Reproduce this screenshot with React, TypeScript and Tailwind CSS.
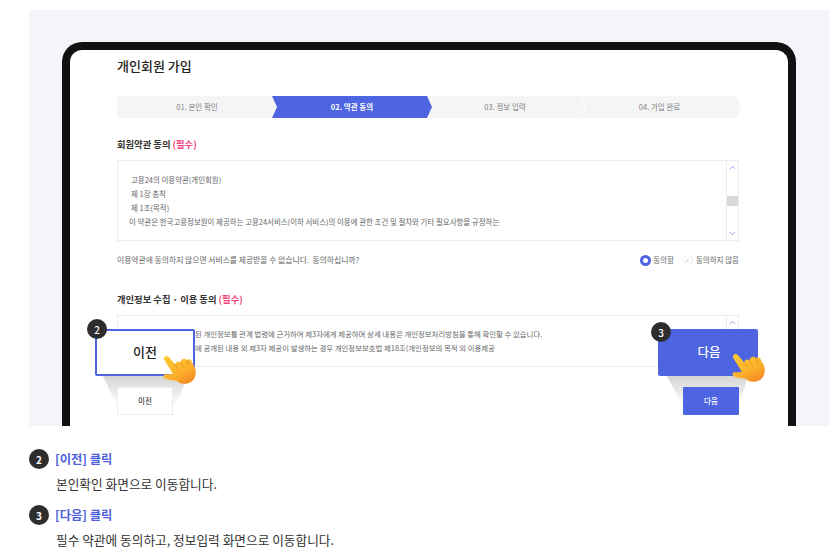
import { ChevronUp, ChevronDown } from 'lucide-react';

const FONT = { fontFamily: '"Noto Sans CJK KR", "Noto Sans", sans-serif' };

function Hand({ className }: { className: string }) {
  return (
    <svg viewBox="0 0 33 29" className={className}>
      <defs>
        <linearGradient id="handFill" x1="0.15" y1="0" x2="0.75" y2="1">
          <stop offset="0" stopColor="#fdc92f" />
          <stop offset="0.6" stopColor="#fbb02a" />
          <stop offset="1" stopColor="#f58a25" />
        </linearGradient>
      </defs>
      <path
        d="M1 4.5C.2 2 3.6-.3 5.8 2L12.2 9.6C12.4 6.6 15.6 5.4 17.4 7.4C17.9 3.6 22 2.4 23.8 5.2C25.6 3.4 28.6 4.6 29 7.4C31.8 11 33.4 15 32.6 19.4C31.7 25.4 26.6 29 21 28.8C17.8 28.7 15.4 27.4 13.2 25.4C9.6 25.6 5.2 25 1.6 23.2C-.4 21.8.4 19 2.8 19.2C5.2 19.4 7.6 19.4 9.8 18.8L1 4.5Z"
        fill="url(#handFill)"
      />
      <path d="M12.2 9.6L15 14M17.4 7.4L20.4 12.4M23.8 5.2L26 10" stroke="#e8891c" strokeWidth="0.8" fill="none" strokeLinecap="round" />
    </svg>
  );
}

function Scrollbar({ thumb }: { thumb?: boolean }) {
  return (
    <div className="w-[12px] shrink-0 border-l border-[#ececec] flex flex-col items-center">
      <ChevronUp className="w-[9px] h-[9px] mt-[2px] text-[#8f9cf0] shrink-0" strokeWidth={2.5} />
      {thumb && <div className="w-full h-[10px] mt-[24px] bg-[#d9d9d9] shrink-0" />}
      {thumb && <ChevronDown className="w-[9px] h-[9px] mt-auto mb-[2px] text-[#8f9cf0] shrink-0" strokeWidth={2.5} />}
    </div>
  );
}

function Required() {
  return <span className="text-[#f0447a]"> (필수)</span>;
}

function Badge({ n, className }: { n: number; className: string }) {
  return (
    <div className={`rounded-full bg-[#2d2d2d] text-white flex items-center justify-center ${className}`}>{n}</div>
  );
}

export default function App() {
  return (
    <div className="w-[840px] h-[550px] overflow-hidden bg-white pt-[10px] pl-[29px]" style={FONT}>
      {/* Guide picture */}
      <div className="relative w-[800px] h-[416px] bg-[#f3f5fa] overflow-hidden pt-[32px] pl-[33px]">
        <div className="w-[734px] h-[400px] bg-white border-[8px] border-b-0 border-[#111111] rounded-t-[20px] pl-[47px] pr-[49px]">
          <h1 className="text-[13px] leading-[20px] font-medium text-[#222] mt-[6px]">개인회원 가입</h1>

          {/* Steps */}
          <div className="flex mt-[20px] h-[22px] text-[7.5px] text-[#808080]">
            <div className="w-[160px] shrink-0 bg-[#f5f5f5] flex items-center justify-center">01. 본인 확인</div>
            <div className="w-[160px] shrink-0 -ml-[5px] bg-[#4d65e0] text-white font-bold flex items-center justify-center relative z-10 [clip-path:polygon(0_0,155px_0,100%_50%,155px_100%,0_100%,5px_50%)]">
              02. 약관 동의
            </div>
            <div className="w-[158px] shrink-0 -ml-[5px] pr-[2px] bg-[#f5f5f5] flex items-center justify-center [clip-path:polygon(0_0,153px_0,100%_50%,153px_100%,0_100%)]">
              03. 정보 입력
            </div>
            <div className="w-[160px] shrink-0 -ml-[4px] pr-[3px] bg-[#f5f5f5] flex items-center justify-center [clip-path:polygon(0_0,155px_0,100%_50%,155px_100%,0_100%,5px_50%)]">
              04. 가입 완료
            </div>
          </div>

          {/* Terms */}
          <h2 className="text-[9.3px] leading-[14px] font-semibold text-[#333] mt-[19px]">
            회원약관 동의
            <Required />
          </h2>
          <div className="flex h-[81px] mt-[9px] border border-[#ececec]">
            <div className="flex-1 pt-[12px] pl-[13px] text-[7.45px] leading-[14px] text-[#666]">
              <p>고용24의 이용약관(개인회원)</p>
              <p>제 1장 총칙</p>
              <p>제 1조(목적)</p>
              <p className="-ml-[2px]">이 약관은 한국고용정보원이 제공하는 고용24서비스(이하 서비스)의 이용에 관한 조건 및 절차와 기타 필요사항을 규정하는</p>
            </div>
            <Scrollbar thumb />
          </div>

          <div className="flex items-center justify-between mt-[12px] h-[14px] text-[7.5px] text-[#666]">
            <p className="text-[7.8px]">이용약관에 동의하지 않으면 서비스를 제공받을 수 없습니다.&nbsp; 동의하십니까?</p>
            <div className="flex items-center">
              <span className="w-[11px] h-[11px] rounded-full border-[3px] border-[#4d65e0] bg-white" />
              <span className="ml-[2px]">동의함</span>
              <span className="ml-[9px] w-[10px] h-[10px] rounded-full border border-[#eeeeee] flex items-center justify-center">
                <span className="w-[3px] h-[3px] rounded-full bg-[#dddddd]" />
              </span>
              <span className="ml-[3px]">동의하지 않음</span>
            </div>
          </div>

          {/* Privacy */}
          <h2 className="text-[9.3px] leading-[14px] font-semibold text-[#333] mt-[25px]">
            개인정보 수집 · 이용 동의
            <Required />
          </h2>
          <div className="flex h-[52px] mt-[9px] border border-[#ececec]">
            <div className="flex-1 pt-[11px] pl-[77px] text-[7.4px] leading-[14px] text-[#666] whitespace-nowrap overflow-hidden">
              <p>된 개인정보를 관계 법령에 근거하여 제3자에게 제공하며 상세 내용은 개인정보처리방침을 통해 확인할 수 있습니다.</p>
              <p>에 공개된 내용 외 제3자 제공이 발생하는 경우 개인정보보호법 제18조(개인정보의 목적 외 이용제공</p>
            </div>
            <Scrollbar />
          </div>

          {/* Buttons */}
          <div className="flex justify-between mt-[20px] relative z-10 text-[7.5px] font-medium">
            <button className="w-[56px] h-[28px] bg-white border border-[#ececec] text-[#444]">이전</button>
            <button className="w-[56px] h-[28px] bg-[#4d65e0] rounded-[1px] text-white">다음</button>
          </div>
        </div>

        {/* Callout: previous */}
        <div className="absolute left-[74px] top-[366px] w-[85px] h-[30px] bg-gradient-to-b from-[#d4d4d4] to-transparent [clip-path:polygon(0_0,100%_0,72px_100%,14px_100%)]" />
        <div className="absolute left-[66px] top-[319px] w-[100px] h-[47px] bg-white border-2 border-[#4d65e0] rounded-[2px] flex items-center justify-center pb-[1px] text-[13px] font-medium text-[#222] z-20">
          이전
        </div>
        <Badge n={2} className="absolute left-[58px] top-[309px] w-[20px] h-[20px] text-[10px] font-medium z-30" />
        <Hand className="absolute left-[134px] top-[345px] w-[33px] h-[29px] z-30" />

        {/* Callout: next */}
        <div className="absolute left-[638px] top-[366px] w-[81px] h-[30px] bg-gradient-to-b from-[#d4d4d4] to-transparent [clip-path:polygon(0_0,100%_0,72px_100%,16px_100%)]" />
        <div className="absolute left-[629px] top-[319px] w-[100px] h-[47px] bg-[#4d65e0] rounded-[2px] flex items-center justify-center pl-[2px] text-[12.5px] font-medium text-white z-20">
          다음
        </div>
        <Badge n={3} className="absolute left-[622px] top-[312px] w-[20px] h-[20px] text-[10px] font-medium z-30" />
        <Hand className="absolute left-[703px] top-[343px] w-[33px] h-[29px] z-30" />
      </div>

      {/* Description */}
      <div className="mt-[23px] w-[500px]">
        <div className="flex items-center h-[20px]">
          <Badge n={2} className="w-[20px] h-[20px] text-[10px] font-bold" />
          <span className="ml-[6px] text-[12.3px] font-bold text-[#4d5fd9]">[이전] 클릭</span>
        </div>
        <p className="mt-[6px] h-[18px] pl-[27px] text-[12.7px] leading-[18px] text-[#333]">본인확인 화면으로 이동합니다.</p>
        <div className="flex items-center h-[20px] mt-[12px]">
          <Badge n={3} className="w-[20px] h-[20px] text-[10px] font-bold" />
          <span className="ml-[6px] text-[12.3px] font-bold text-[#4d5fd9]">[다음] 클릭</span>
        </div>
        <p className="mt-[6px] h-[18px] pl-[27px] text-[12.7px] leading-[18px] text-[#333]">필수 약관에 동의하고, 정보입력 화면으로 이동합니다.</p>
      </div>
    </div>
  );
}
